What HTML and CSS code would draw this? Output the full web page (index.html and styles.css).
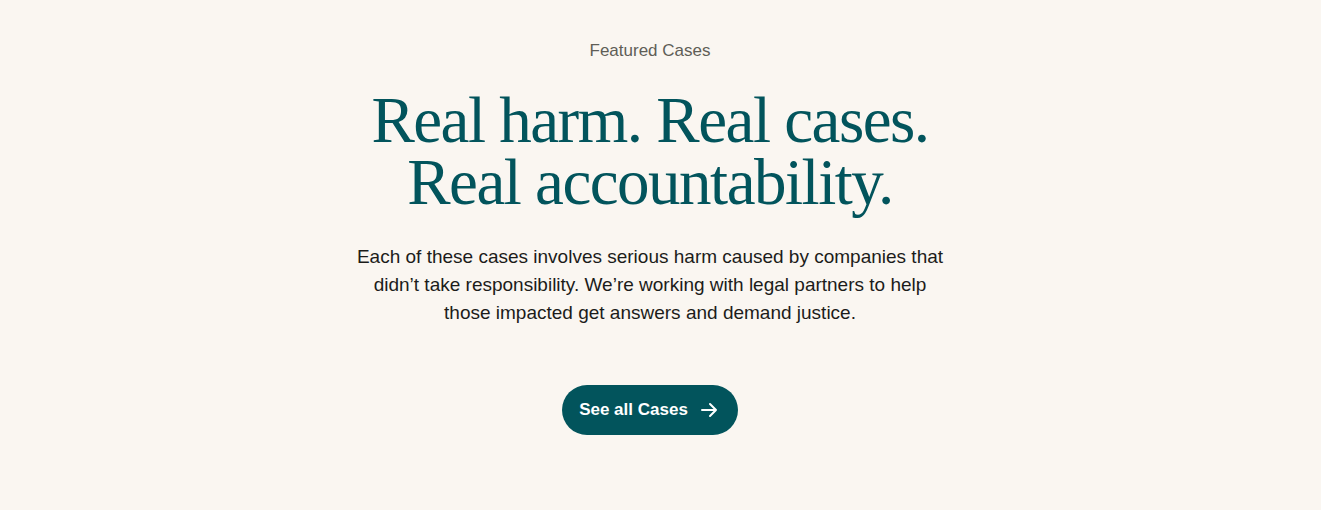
FILE: index.html
```html
<!DOCTYPE html>
<html lang="en">
<head>
<meta charset="utf-8">
<title>Featured Cases</title>
<link rel="stylesheet" href="styles.css">
</head>
<body>
<section class="featured">
  <p class="eyebrow">Featured Cases</p>
  <h2 class="title">Real harm. Real cases.<br>Real accountability.</h2>
  <p class="lede">Each of these cases involves serious harm caused by companies that didn’t take responsibility. We’re working with legal partners to help those impacted get answers and demand justice.</p>
  <a class="cta" href="#">See all Cases
    <svg class="cta-icon" width="20" height="20" viewBox="0 0 20 20" fill="none" stroke="currentColor" stroke-width="2" stroke-linecap="round" stroke-linejoin="round"><path d="M3 10h14M11 4l6 6-6 6"/></svg>
  </a>
</section>
</body>
</html>
```
FILE: styles.css
```css
html, body {
  margin: 0;
  padding: 0;
  background: #faf6f1;
}
body {
  font-family: "Liberation Sans", Arial, sans-serif;
  height: 510px;
}
.featured {
  width: 1300px;
  display: flex;
  flex-direction: column;
  align-items: center;
  padding-top: 41px;
}
.eyebrow {
  margin: 0;
  font-size: 17px;
  line-height: 20px;
  color: #5f5e57;
}
.title {
  margin: 28px 0 0;
  font-family: "Liberation Serif", "Times New Roman", serif;
  font-weight: 400;
  font-size: 65px;
  line-height: 62px;
  letter-spacing: -1.5px;
  color: #02545c;
  text-align: center;
}
.lede {
  margin: 30px 0 0;
  width: 595px;
  font-size: 19px;
  line-height: 28px;
  color: #1c1c1a;
  text-align: center;
}
.cta {
  margin-top: 58px;
  display: flex;
  align-items: center;
  gap: 11px;
  height: 50px;
  padding: 0 19px 0 17px;
  border-radius: 25px;
  background: #02545c;
  color: #ffffff;
  font-size: 17px;
  font-weight: 700;
  text-decoration: none;
  box-sizing: border-box;
}
.cta-icon {
  display: block;
}
```
